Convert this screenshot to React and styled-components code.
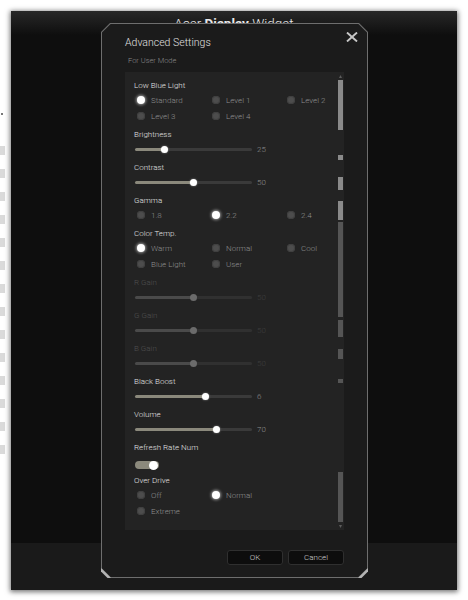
import React from 'react';
import styled, { createGlobalStyle } from 'styled-components';

const GlobalStyle = createGlobalStyle`
  html, body {
    margin: 0;
    background: #fff;
  }
  body {
    font-family: Roboto, "Liberation Sans", sans-serif;
  }
`;

const chamfer = (c) => `polygon(${c}px 0, calc(100% - ${c}px) 0, 100% ${c}px, 100% calc(100% - ${c}px), calc(100% - ${c}px) 100%, ${c}px 100%, 0 calc(100% - ${c}px), 0 ${c}px)`;

const FILL = '#8b897c';

const SCROLL_SEGMENTS = [
  { y: 8, h: 50, light: true },
  { y: 83, h: 5, light: true },
  { y: 105, h: 13, light: true },
  { y: 129, h: 19, light: true },
  { y: 150, h: 95 },
  { y: 248, h: 17 },
  { y: 277, h: 10 },
  { y: 307, h: 4 },
  { y: 400, h: 50 },
];

export default function App () {
  return (
    <>
      <GlobalStyle />
      <Page>
        <Strip>
          <Speck />
          {Array.from({ length: 14 }).map((_, i) => <StripMark key={i} />)}
        </Strip>
        <Window>
          <WindowHeader>
            <WindowTitle>Acer <b>Display</b> Widget</WindowTitle>
          </WindowHeader>
          <WindowBody />
          <WindowFooter />

          <Dialog>
            <Frame>
              <DialogBody>
                <DialogHeader>
                  <DialogTitle>Advanced Settings</DialogTitle>
                  <CloseButton aria-label="Close">
                    <svg width="12" height="10" viewBox="0 0 12 10">
                      <path d="M1 0.5 L11 9.5 M11 0.5 L1 9.5" stroke="#c6c6c6" strokeWidth="1.9" fill="none" />
                    </svg>
                  </CloseButton>
                </DialogHeader>
                <Subtitle>For User Mode</Subtitle>

                <Panel>
                  <PanelContent>
                    <Section $mt={0}>
                      <Label>Low Blue Light</Label>
                      <RadioGroup
                        options={['Standard', 'Level 1', 'Level 2', 'Level 3', 'Level 4']}
                        selected="Standard"
                      />
                    </Section>
                    <SliderSection label="Brightness" value={25} />
                    <SliderSection label="Contrast" value={50} />
                    <Section>
                      <Label>Gamma</Label>
                      <RadioGroup options={['1.8', '2.2', '2.4']} selected="2.2" />
                    </Section>
                    <Section>
                      <Label>Color Temp.</Label>
                      <RadioGroup
                        options={['Warm', 'Normal', 'Cool', 'Blue Light', 'User']}
                        selected="Warm"
                      />
                    </Section>
                    <SliderSection label="R Gain" value={50} disabled />
                    <SliderSection label="G Gain" value={50} disabled />
                    <SliderSection label="B Gain" value={50} disabled />
                    <SliderSection label="Black Boost" value={6} max={10} />
                    <SliderSection label="Volume" value={70} />
                    <Section>
                      <Label>Refresh Rate Num</Label>
                      <ToggleRow>
                        <Toggle><Knob /></Toggle>
                      </ToggleRow>
                    </Section>
                    <Section $mt={2}>
                      <Label>Over Drive</Label>
                      <RadioGroup options={['Off', 'Normal', 'Extreme']} selected="Normal" cols={2} />
                    </Section>
                  </PanelContent>
                  <Scrollbar width="5" height="458" viewBox="0 0 5 458">
                    <polygon points="2.5,3 4,6 1,6" fill="#5c5c5c" />
                    {SCROLL_SEGMENTS.map((s, i) => (
                      <rect key={i} x="0" y={s.y} width="5" height={s.h} fill={s.light ? '#8a8a8a' : '#555'} />
                    ))}
                    <polygon points="1,453 4,453 2.5,456" fill="#5c5c5c" />
                  </Scrollbar>
                </Panel>

                <Buttons>
                  <Button>OK</Button>
                  <Button>Cancel</Button>
                </Buttons>
              </DialogBody>
            </Frame>
            <CornerLeft width="10" height="10" viewBox="0 0 10 10">
              <polygon points="0,0 0,3.5 6.5,10 10,10" fill="#b3b3b3" />
            </CornerLeft>
            <CornerRight width="10" height="10" viewBox="0 0 10 10">
              <polygon points="10,0 10,3.5 3.5,10 0,10" fill="#b3b3b3" />
            </CornerRight>
          </Dialog>
        </Window>
      </Page>
    </>
  );
}

function RadioGroup ({ options, selected, cols = 3 }) {
  return (
    <RadioGrid $cols={cols}>
      {options.map((o) => (
        <RadioOption key={o}>
          <RadioDot $on={o === selected} />
          {o}
        </RadioOption>
      ))}
    </RadioGrid>
  );
}

function SliderSection ({ label, value, max = 100, disabled = false }) {
  const pct = (value / max) * 100;
  return (
    <Section>
      <Label $disabled={disabled}>{label}</Label>
      <SliderRow>
        <Track $pct={pct} $disabled={disabled}>
          <Thumb $disabled={disabled} style={{ left: `calc(${pct}% - 3.5px)` }} />
        </Track>
        <Value $disabled={disabled}>{value}</Value>
      </SliderRow>
    </Section>
  );
}

const Page = styled.div`
  display: flex;
  align-items: flex-start;
  height: 600px;
  padding-top: 11px;
  box-sizing: border-box;
  overflow: hidden;
`;

const Strip = styled.div`
  flex: 0 0 11px;
  display: flex;
  flex-direction: column;
  gap: 14px;
  padding-top: 102px;
`;

const Speck = styled.div`
  width: 2px;
  height: 2px;
  margin-left: 1px;
  margin-bottom: 17px;
  background: #777;
`;

const StripMark = styled.div`
  width: 5px;
  height: 9px;
  background: #dadada;
`;

const Window = styled.div`
  position: relative;
  width: 446px;
  height: 579px;
  display: flex;
  flex-direction: column;
  background: #0e0e0e;
  box-shadow: 0 1px 5px 1px rgba(0, 0, 0, .55);
`;

const WindowHeader = styled.div`
  height: 40px;
  padding-top: 4px;
  box-sizing: border-box;
  text-align: center;
  background: linear-gradient(#282828, #0e0e0e 24px);
`;

const WindowTitle = styled.div`
  font-size: 13.5px;
  line-height: 16px;
  font-weight: 300;
  color: #e8e8e8;

  b {
    font-weight: 700;
  }
`;

const WindowBody = styled.div`
  flex: 1 1 auto;
`;

const WindowFooter = styled.div`
  height: 47px;
  background: #1a1a1a;
`;

const Dialog = styled.div`
  position: absolute;
  left: 90px;
  top: 12px;
  width: 267px;
  height: 555px;
`;

const Frame = styled.div`
  height: 100%;
  padding: 1px;
  box-sizing: border-box;
  background: #6e6e6e;
  clip-path: ${chamfer(9)};
`;

const DialogBody = styled.div`
  height: 100%;
  box-sizing: border-box;
  padding: 8px 9px 0 23px;
  display: flex;
  flex-direction: column;
  background: #1b1b1b;
  clip-path: ${chamfer(8.6)};
`;

const DialogHeader = styled.div`
  display: flex;
  justify-content: space-between;
  align-items: flex-start;
`;

const DialogTitle = styled.div`
  margin-top: 4px;
  font-size: 10.5px;
  line-height: 14px;
  font-weight: 300;
  color: #e0e0e0;
`;

const CloseButton = styled.div`
  display: flex;
  cursor: pointer;
`;

const Subtitle = styled.div`
  margin-top: 6px;
  padding-left: 3px;
  font-size: 7.5px;
  line-height: 10px;
  font-weight: 300;
  color: #8a8a8a;
`;

const Panel = styled.div`
  display: flex;
  width: 219px;
  height: 458px;
  margin-top: 6px;
  background: #232323;
`;

const PanelContent = styled.div`
  flex: 1 1 auto;
  min-width: 0;
  display: flex;
  flex-direction: column;
  padding: 8px 0 0 9px;
`;

const Scrollbar = styled.svg`
  flex: 0 0 5px;
  margin-right: 1px;
`;

const Section = styled.div`
  display: flex;
  flex-direction: column;
  margin-top: ${(p) => (p.$mt ?? 5)}px;
`;

const Label = styled.div`
  font-size: 8px;
  line-height: 12px;
  font-weight: 300;
  color: ${(p) => (p.$disabled ? '#4f4f4f' : '#e2e2e2')};
`;

const RadioGrid = styled.div`
  display: grid;
  grid-template-columns: ${(p) => (p.$cols === 2 ? '75px 1fr' : '75px 75px 1fr')};
  grid-auto-rows: 16px;
  padding-left: 3px;
`;

const RadioOption = styled.div`
  display: flex;
  align-items: center;
  gap: 6px;
  font-size: 8px;
  font-weight: 300;
  color: #8f8f8f;
  white-space: nowrap;
`;

const RadioDot = styled.span`
  flex: 0 0 8px;
  width: 8px;
  height: 8px;
  border-radius: 50%;
  box-sizing: border-box;
  background: ${(p) => (p.$on ? '#fff' : '#4d4d4d')};
  box-shadow: ${(p) => (p.$on ? '0 0 3px 1px rgba(255,255,255,.55)' : 'inset 0 0 0 1px #404040')};
`;

const SliderRow = styled.div`
  display: flex;
  align-items: center;
  height: 16px;
  padding-left: 1px;
`;

const Track = styled.div`
  position: relative;
  width: 117px;
  height: 3px;
  border-radius: 2px;
  background: linear-gradient(to right,
    ${(p) => (p.$disabled ? '#4a4a4a' : FILL)} ${(p) => p.$pct}%,
    ${(p) => (p.$disabled ? '#303030' : '#3a3a3a')} ${(p) => p.$pct}%);
`;

const Thumb = styled.span`
  position: absolute;
  top: -2px;
  width: 7px;
  height: 7px;
  border-radius: 50%;
  background: ${(p) => (p.$disabled ? '#6b6b6b' : '#fff')};
  box-shadow: ${(p) => (p.$disabled ? 'none' : '0 0 2px rgba(255,255,255,.5)')};
`;

const Value = styled.span`
  margin-left: 5px;
  font-size: 8px;
  font-weight: 300;
  color: ${(p) => (p.$disabled ? '#3e3e3e' : '#8f8f8f')};
`;

const ToggleRow = styled.div`
  display: flex;
  align-items: center;
  height: 16px;
  margin-top: 3px;
  padding-left: 1px;
`;

const Toggle = styled.div`
  display: flex;
  align-items: center;
  justify-content: flex-end;
  width: 24px;
  height: 8px;
  padding-right: 1px;
  box-sizing: border-box;
  border-radius: 4px;
  background: ${FILL};
`;

const Knob = styled.span`
  width: 9px;
  height: 9px;
  border-radius: 50%;
  background: #fff;
`;

const Buttons = styled.div`
  display: flex;
  justify-content: flex-end;
  gap: 5px;
  width: 219px;
  margin-top: 20px;
`;

const Button = styled.div`
  width: 56px;
  height: 15px;
  box-sizing: border-box;
  display: flex;
  align-items: center;
  justify-content: center;
  border: 1px solid #2f2f2f;
  border-radius: 3px;
  background: #0d0d0d;
  font-size: 8px;
  font-weight: 300;
  color: #d0d0d0;
  cursor: pointer;
`;

const CornerLeft = styled.svg`
  position: absolute;
  left: 0;
  bottom: 0;
`;

const CornerRight = styled.svg`
  position: absolute;
  right: 0;
  bottom: 0;
`;
